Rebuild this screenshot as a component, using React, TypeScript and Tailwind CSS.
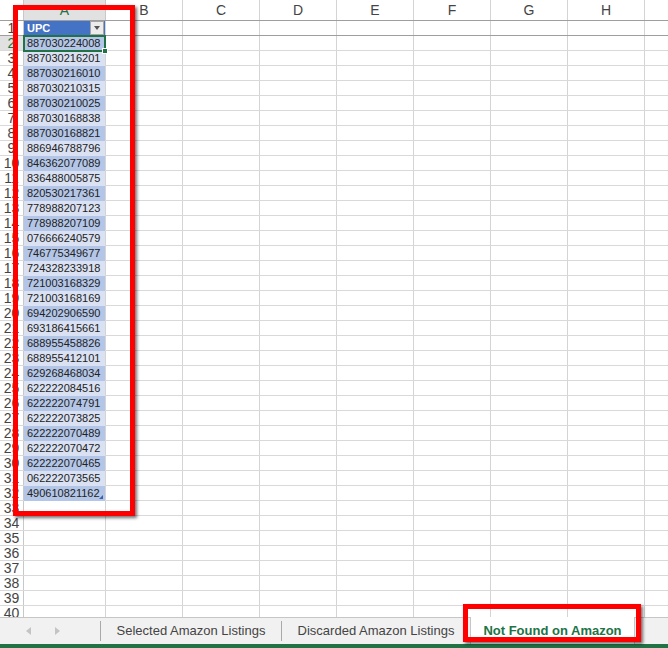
const upcs = [
  '887030224008',
  '887030216201',
  '887030216010',
  '887030210315',
  '887030210025',
  '887030168838',
  '887030168821',
  '886946788796',
  '846362077089',
  '836488005875',
  '820530217361',
  '778988207123',
  '778988207109',
  '076666240579',
  '746775349677',
  '724328233918',
  '721003168329',
  '721003168169',
  '694202906590',
  '693186415661',
  '688955458826',
  '688955412101',
  '629268468034',
  '622222084516',
  '622222074791',
  '622222073825',
  '622222070489',
  '622222070472',
  '622222070465',
  '062222073565',
  '490610821162',
];

const otherCols = ['B', 'C', 'D', 'E', 'F', 'G', 'H'];
const rowCount = 40;

const EmptyCells = () => (
  <>
    {otherCols.map((c) => (
      <div key={c} className="w-[77px] shrink-0 border-r border-[#d4d4d4]" />
    ))}
    <div className="flex-1" />
  </>
);

const ColumnHeader = () => (
  <div className="flex h-[21px] border-b border-[#9e9e9e] text-[14px] text-[#444]">
    <div className="w-[24px] shrink-0 border-r border-[#c8c8c8]" />
    <div className="w-[82px] shrink-0 flex items-center justify-center bg-[#e1e1e1] text-[#217346] border-r border-[#c8c8c8]">
      A
    </div>
    {otherCols.map((c) => (
      <div key={c} className="w-[77px] shrink-0 flex items-center justify-center border-r border-[#d4d4d4]">
        {c}
      </div>
    ))}
    <div className="flex-1" />
  </div>
);

const GridRow = ({ n }: { n: number }) => {
  const isHeader = n === 1;
  const value = isHeader ? 'UPC' : upcs[n - 2];
  const hasData = n <= 32;
  const dark = n % 2 === 0;

  let fill = '';
  if (isHeader) fill = 'bg-[#4472c4] text-white font-bold';
  else if (hasData) fill = dark ? 'bg-[#b4c6e7] text-[#222]' : 'bg-[#d9e1f2] text-[#222]';

  return (
    <div
      className={`flex h-[15px] shrink-0 ${
        isHeader ? 'border-b border-[#9e9e9e]' : 'border-b border-[#d9d9d9]'
      }`}
    >
      <div
        className={`w-[24px] shrink-0 flex items-center justify-center text-[14px] leading-none border-r border-[#c8c8c8] ${
          n === 2 ? 'text-[#217346] bg-[#e1e1e1]' : 'text-[#444]'
        }`}
      >
        {n}
      </div>
      <div className="relative w-[82px] shrink-0 border-r border-[#d4d4d4]">
        <div className={`absolute inset-x-0 top-0 -bottom-px pl-[3px] flex items-center text-[11px] leading-none ${fill}`}>
          {hasData ? value : ''}
        </div>
        {isHeader && (
          <div className="absolute right-[1px] top-0 w-[14px] h-[14px] bg-[#ececec] border border-[#a6a6a6] flex items-center justify-center">
            <div className="w-0 h-0 border-l-[3px] border-r-[3px] border-t-[4px] border-l-transparent border-r-transparent border-t-[#555]" />
          </div>
        )}
        {n === 2 && (
          <div className="absolute -left-px -top-px -right-px -bottom-[2px] border-2 border-[#217346] z-10">
            <div className="absolute -right-[4px] -bottom-[4px] w-[6px] h-[6px] bg-[#217346] border border-white" />
          </div>
        )}
        {n === 32 && (
          <div className="absolute right-[2px] bottom-[1px] w-0 h-0 border-l-[4px] border-b-[4px] border-l-transparent border-b-[#3c5fa8]" />
        )}
      </div>
      <EmptyCells />
    </div>
  );
};

const TabBar = () => (
  <div className="flex h-[27px] shrink-0 bg-[#f1f1f1] border-t border-[#c6c6c6] text-[13px] text-[#444]">
    <div className="w-[100px] shrink-0 flex items-center">
      <div className="ml-[26px] w-0 h-0 border-t-[4px] border-b-[4px] border-r-[5px] border-t-transparent border-b-transparent border-r-[#c4c4c4]" />
      <div className="ml-[24px] w-0 h-0 border-t-[4px] border-b-[4px] border-l-[5px] border-t-transparent border-b-transparent border-l-[#c4c4c4]" />
    </div>
    <div className="w-px shrink-0 my-[3px] bg-[#a9a9a9]" />
    <div className="w-[180px] shrink-0 flex items-center justify-center">Selected Amazon Listings</div>
    <div className="w-px shrink-0 my-[3px] bg-[#a9a9a9]" />
    <div className="w-[188px] shrink-0 flex items-center justify-center">Discarded Amazon Listings</div>
    <div className="w-[165px] shrink-0 -mt-px bg-white border-l border-r border-[#c6c6c6] flex items-center justify-center font-bold text-[#217346]">
      Not Found on Amazon
    </div>
    <div className="flex-1" />
  </div>
);

export default function App() {
  return (
    <div className="relative w-[668px] h-[648px] overflow-hidden bg-white flex flex-col font-['Liberation_Sans',Arial,sans-serif]">
      <div className="flex-1 overflow-hidden">
        <ColumnHeader />
        {Array.from({ length: rowCount }, (_, i) => (
          <GridRow key={i} n={i + 1} />
        ))}
      </div>
      <TabBar />
      <div className="h-[4px] shrink-0 bg-[#217346]" />

      {/* red highlight boxes */}
      <div className="absolute left-[13px] top-[5px] w-[122px] h-[511px] border-[5px] border-[#ff0000] shadow-[2px_2px_3px_rgba(0,0,0,0.55)] pointer-events-none" />
      <div className="absolute left-[463px] top-[604px] w-[178px] h-[38px] border-[5px] border-[#ff0000] shadow-[2px_2px_3px_rgba(0,0,0,0.55)] pointer-events-none" />
    </div>
  );
}
